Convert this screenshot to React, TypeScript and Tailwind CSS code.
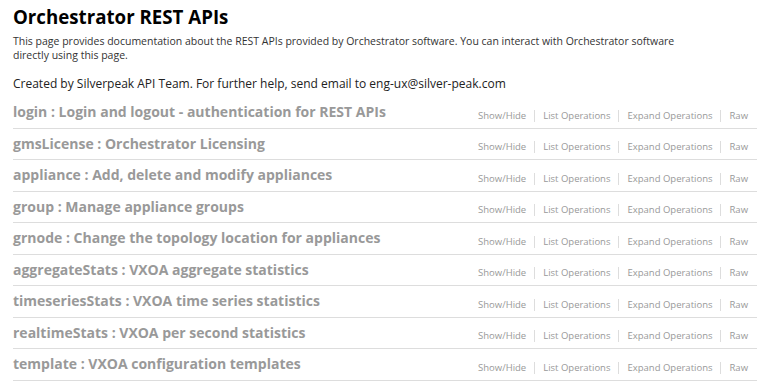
const apis = [
  { name: 'login', desc: 'Login and logout - authentication for REST APIs' },
  { name: 'gmsLicense', desc: 'Orchestrator Licensing' },
  { name: 'appliance', desc: 'Add, delete and modify appliances' },
  { name: 'group', desc: 'Manage appliance groups' },
  { name: 'grnode', desc: 'Change the topology location for appliances' },
  { name: 'aggregateStats', desc: 'VXOA aggregate statistics' },
  { name: 'timeseriesStats', desc: 'VXOA time series statistics' },
  { name: 'realtimeStats', desc: 'VXOA per second statistics' },
  { name: 'template', desc: 'VXOA configuration templates' },
]

const links = ['Show/Hide', 'List Operations', 'Expand Operations', 'Raw']

export default function App() {
  return (
    <div className="w-[766px] h-[385px] overflow-hidden bg-white px-[13px] pt-[3px] font-['Open_Sans',sans-serif] text-[#222]">
      <h1 className="text-[18.7px] font-bold leading-[28px] text-black">Orchestrator REST APIs</h1>
      <p className="mt-[3px] w-[670px] text-[10.5px] leading-[14px] text-[#333]">
        This page provides documentation about the REST APIs provided by Orchestrator software. You can interact with
        Orchestrator software directly using this page.
      </p>
      <p className="mt-[14px] text-[12px] leading-[16px] text-[#222]">
        Created by Silverpeak API Team. For further help, send email to eng-ux@silver-peak.com
      </p>

      <div className="mt-[5px] w-[744px]">
        {apis.map((api) => (
          <div
            key={api.name}
            className="flex h-[31.5px] items-center justify-between border-b border-[#dddddd]"
          >
            <h2 className="text-[14px] font-bold leading-none text-[#999999]">
              {api.name} : {api.desc}
            </h2>
            <ul className="mt-[7px] flex items-center pr-[9px]">
              {links.map((l, i) => (
                <li
                  key={l}
                  className={
                    i === links.length - 1
                      ? 'pl-[8px] text-[9.5px] leading-[12px] text-[#999999]'
                      : 'border-r border-[#dddddd] px-[8px] text-[9.5px] leading-[12px] text-[#999999]'
                  }
                >
                  {l}
                </li>
              ))}
            </ul>
          </div>
        ))}
      </div>
    </div>
  )
}
